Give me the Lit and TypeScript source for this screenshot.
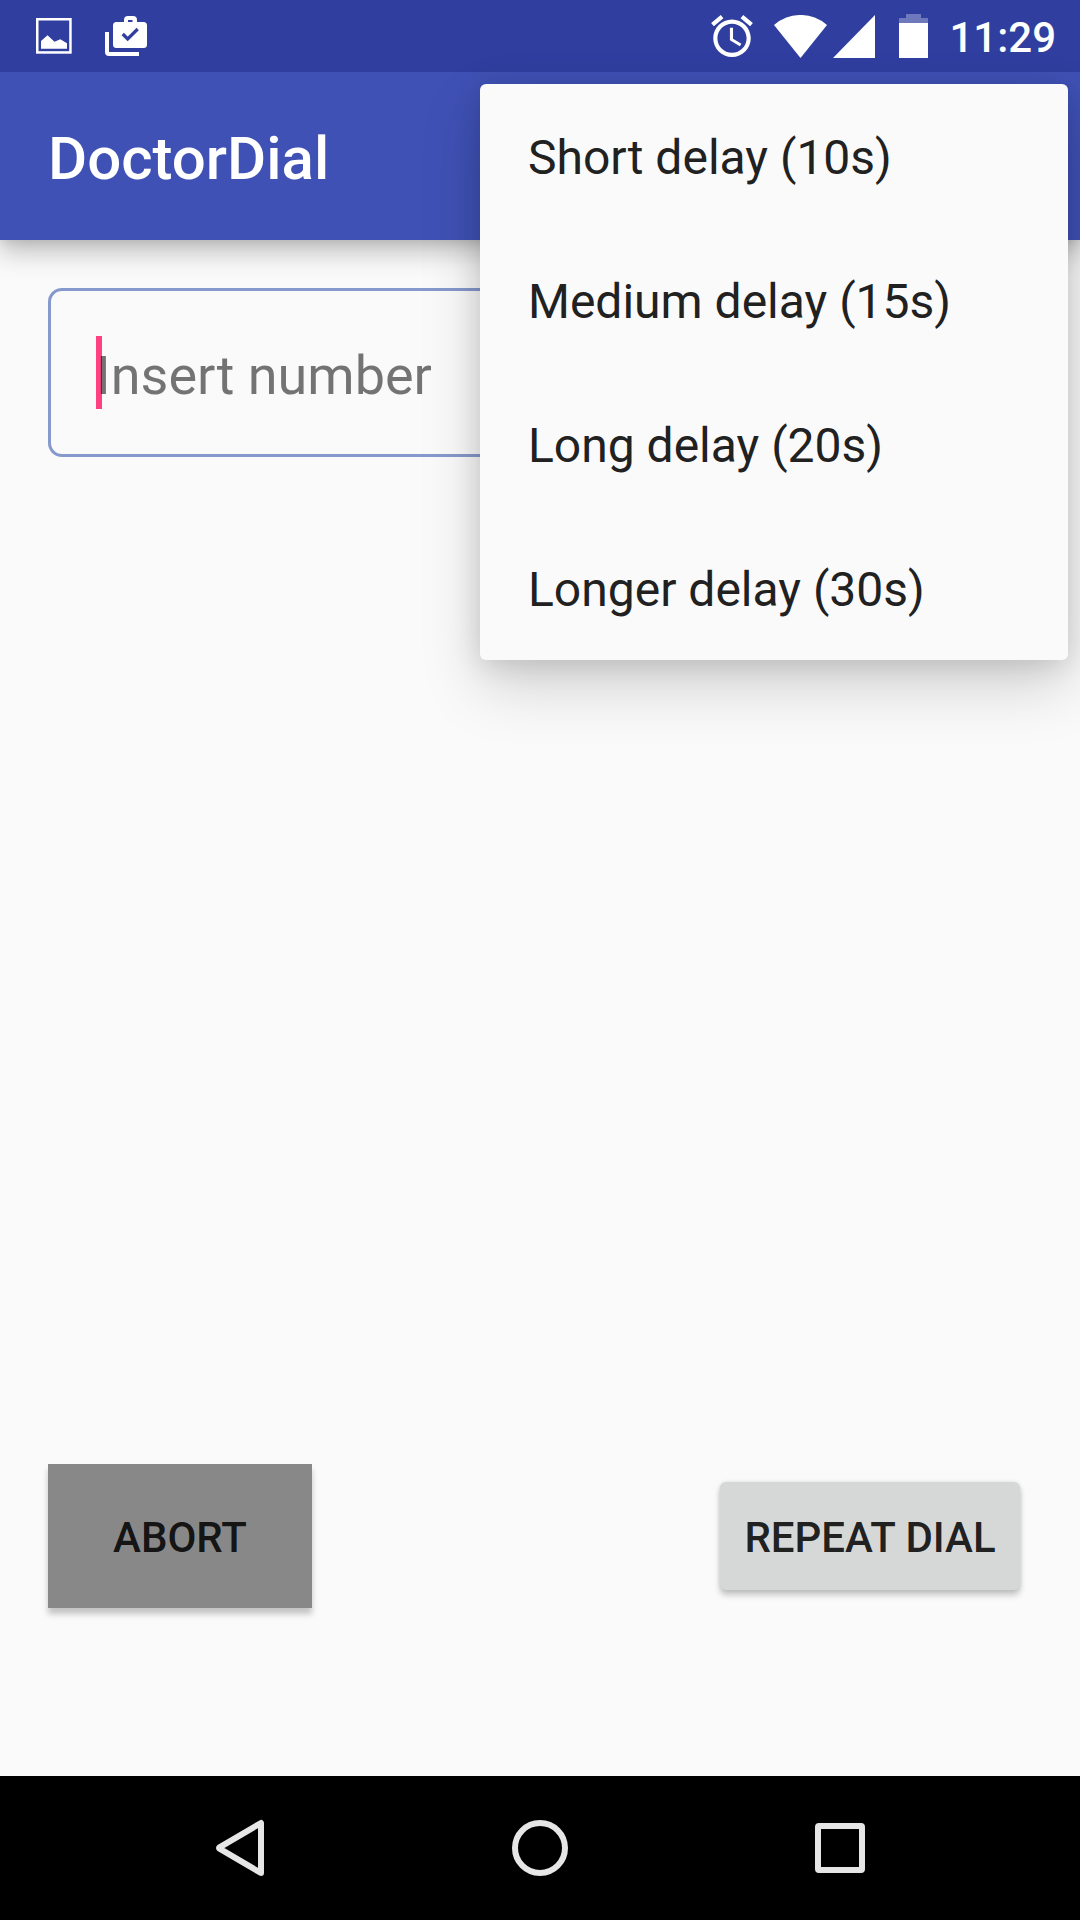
import { LitElement, html, css, svg } from "lit";
import { customElement, state } from "lit/decorators.js";

const DELAYS = [
  { label: "Short delay", seconds: 10 },
  { label: "Medium delay", seconds: 15 },
  { label: "Long delay", seconds: 20 },
  { label: "Longer delay", seconds: 30 },
];

@customElement("status-bar")
export class StatusBar extends LitElement {
  static styles = css`
    :host {
      display: flex;
      align-items: center;
      justify-content: space-between;
      position: relative;
      z-index: 1;
      height: 72px;
      padding: 0 24px 0 36px;
      background: #303f9f;
      color: #fff;
    }
    .group {
      display: flex;
      align-items: center;
    }
    .notices {
      gap: 33px;
    }
    .system {
      gap: 21px;
    }
    .radio {
      gap: 6px;
    }
    svg {
      display: block;
      fill: currentColor;
    }
    .time {
      font-size: 42px;
      line-height: 48px;
      font-weight: 500;
      padding-top: 4px;
    }
  `;

  render() {
    return html`
      <div class="group notices">
        <svg width="36" height="36" viewBox="0 0 36 36" aria-hidden="true">
          <rect x="1.25" y="1.25" width="33.2" height="33.2" fill="none" stroke="currentColor" stroke-width="2.5" />
          <path d="M5 23L11.5 17.3 18.5 23.7 24.3 21.3 31 25.3V30.7H5z" />
        </svg>
        <svg width="42" height="40" viewBox="0 0 42 40" aria-hidden="true">
          <path fill-rule="evenodd" d="M19 6V4a4 4 0 0 1 4-4h5a4 4 0 0 1 4 4v2h6.500a3.500 3.500 0 0 1 3.500 3.500v19a3.500 3.500 0 0 1-3.500 3.500h-27a3.500 3.500 0 0 1-3.500-3.500v-19a3.500 3.500 0 0 1 3.500-3.500zM23 4v2h4.500V4z" />
          <path d="M0 16H4V36H34V40H4a4 4 0 0 1-4-4z" />
          <path d="M17.700 18L22.700 23 32.700 13" fill="none" stroke="#303f9f" stroke-width="3.200" />
        </svg>
      </div>
      <div class="group system">
        <svg width="42" height="42" viewBox="2 1.860 20 20.140" aria-hidden="true">
          <path d="M22 5.720l-4.600-3.860-1.290 1.530 4.600 3.860L22 5.720zM7.880 3.390L6.600 1.860 2 5.710l1.290 1.530 4.590-3.850zM12.500 8H11v6l4.750 2.850.75-1.230-4-2.370V8zM12 4c-4.970 0-9 4.030-9 9s4.020 9 9 9c4.970 0 9-4.030 9-9s-4.030-9-9-9zm0 16c-3.870 0-7-3.130-7-7s3.130-7 7-7 7 3.130 7 7-3.130 7-7 7z" />
        </svg>
        <div class="group radio">
          <svg width="53" height="43" viewBox="0 0 53 43" aria-hidden="true">
            <path d="M0 10A40 40 0 0 1 53 10L26.500 43z" />
          </svg>
          <svg width="45" height="43" viewBox="0 0 45 43" aria-hidden="true">
            <path d="M42 0V43H0z" />
          </svg>
        </div>
        <svg width="29" height="44" viewBox="0 0 29 44" aria-hidden="true">
          <path opacity="0.3" d="M7 0H22V4H29V9H0V4H7z" />
          <path d="M0 9H29V44H0z" />
        </svg>
        <time class="time">11:29</time>
      </div>
    `;
  }
}

@customElement("delay-menu")
export class DelayMenu extends LitElement {
  static styles = css`
    :host {
      display: flex;
      flex-direction: column;
      background: #fafafa;
      border-radius: 6px;
      box-shadow: 0 26px 60px rgba(0, 0, 0, 0.17), 0 4px 28px rgba(0, 0, 0, 0.13);
    }
    .item {
      height: 144px;
      padding: 4px 48px 0;
      border: 0;
      background: none;
      color: #212121;
      font: inherit;
      font-size: 48px;
      line-height: 56px;
      text-align: left;
    }
  `;

  render() {
    return DELAYS.map(
      (d) => html`<button class="item" role="menuitem">${d.label} (${d.seconds}s)</button>`
    );
  }
}

@customElement("nav-bar")
export class NavBar extends LitElement {
  static styles = css`
    :host {
      display: grid;
      grid-template-columns: repeat(3, 300px);
      justify-content: center;
      height: 144px;
      background: #000;
      color: #e6e6e6;
    }
    .key {
      display: flex;
      align-items: center;
      justify-content: center;
      padding: 0;
      border: 0;
      background: none;
      color: inherit;
    }
    svg {
      display: block;
      fill: none;
      stroke: currentColor;
      stroke-width: 6;
      stroke-linejoin: round;
    }
  `;

  private key(label: string, shape: unknown) {
    return html`<button class="key" aria-label=${label}>
      <svg width="60" height="60" viewBox="0 0 60 60" aria-hidden="true">${shape}</svg>
    </button>`;
  }

  render() {
    return html`
      ${this.key("Back", svg`<path d="M51 5V55L9.500 30.700Q8.500 30 9.500 29.300z" />`)}
      ${this.key("Home", svg`<circle cx="30" cy="30" r="25" />`)}
      ${this.key("Recents", svg`<rect x="8" y="8" width="44" height="44" rx="1" />`)}
    `;
  }
}

@customElement("app-root")
export class AppRoot extends LitElement {
  static styles = css`
    :host {
      display: flex;
      flex-direction: column;
      position: relative;
      min-height: 100vh;
      overflow: hidden;
      background: #fafafa;
      font-family: Roboto, "Noto Sans", sans-serif;
    }
    .bar {
      display: flex;
      align-items: center;
      height: 168px;
      box-sizing: border-box;
      padding: 6px 48px 0;
      background: #3f51b5;
      box-shadow: 0 12px 24px rgba(0, 0, 0, 0.24), 0 0 12px rgba(0, 0, 0, 0.12);
    }
    .title {
      margin: 0;
      color: #fff;
      font-size: 60px;
      line-height: 72px;
      font-weight: 500;
    }
    .content {
      flex: 1;
      display: flex;
      flex-direction: column;
      justify-content: space-between;
      padding: 48px 48px 168px;
    }
    .field {
      display: flex;
      position: relative;
    }
    .caret {
      position: absolute;
      left: 48px;
      top: 48px;
      width: 6px;
      height: 73px;
      background: #ff4081;
    }
    .number {
      position: relative;
      flex: 1;
      min-width: 0;
      height: 169px;
      box-sizing: border-box;
      padding: 6px 45px 0;
      border: 3px solid #8699cc;
      border-radius: 14px;
      outline: 0;
      background: transparent;
      color: #212121;
      font: inherit;
      font-size: 54px;
      caret-color: #ff4081;
    }
    .number::placeholder {
      color: rgba(0, 0, 0, 0.54);
      opacity: 1;
    }
    .actions {
      display: flex;
      align-items: center;
      justify-content: space-between;
      padding-right: 12px;
    }
    .action {
      border: 0;
      padding: 2px 20px 0;
      color: rgba(0, 0, 0, 0.87);
      font: inherit;
      font-size: 42px;
      font-weight: 500;
      text-transform: uppercase;
      white-space: nowrap;
    }
    .abort {
      min-width: 264px;
      height: 144px;
      background: #888;
      box-shadow: 0 6px 6px rgba(0, 0, 0, 0.22);
    }
    .repeat {
      min-width: 300px;
      height: 108px;
      border-radius: 6px;
      background: #d6d7d7;
      box-shadow: 0 5px 6px rgba(0, 0, 0, 0.22), 0 0 4px rgba(0, 0, 0, 0.1);
    }
    .menu {
      position: absolute;
      z-index: 2;
      top: 84px;
      right: 12px;
      width: 588px;
    }
  `;

  @state() private number = "";

  private onInput(e: Event) {
    this.number = (e.target as HTMLInputElement).value;
  }

  render() {
    return html`
      <status-bar></status-bar>
      <header class="bar"><h1 class="title">DoctorDial</h1></header>
      <main class="content">
        <div class="field">
          ${this.number ? null : html`<span class="caret"></span>`}
          <input
            class="number"
            type="tel"
            aria-label="Insert number"
            placeholder="Insert number"
            .value=${this.number}
            @input=${this.onInput}
          />
        </div>
        <div class="actions">
          <button class="action abort">Abort</button>
          <button class="action repeat">Repeat dial</button>
        </div>
      </main>
      <nav-bar></nav-bar>
      <delay-menu class="menu" role="menu"></delay-menu>
    `;
  }
}
